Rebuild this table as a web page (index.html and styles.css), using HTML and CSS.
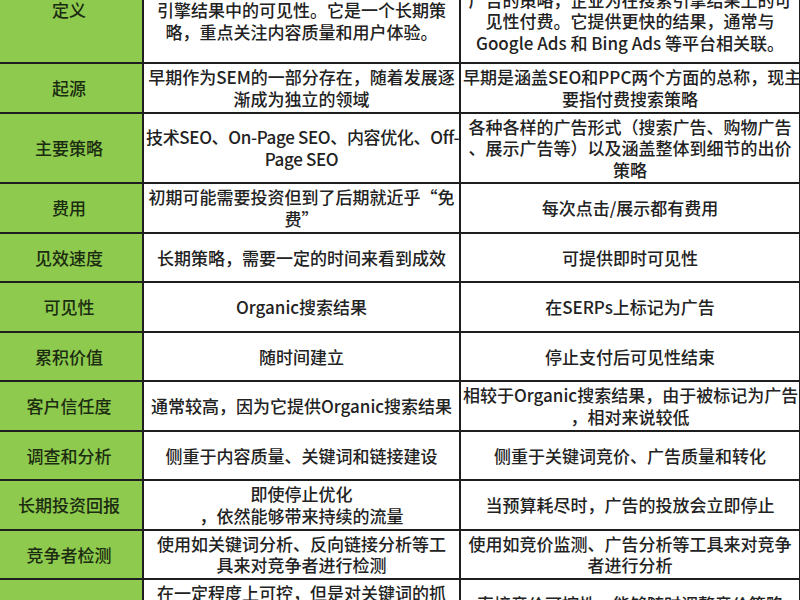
FILE: index.html
```html
<!DOCTYPE html>
<html lang="zh-CN">
<head>
<meta charset="utf-8">
<title>SEO 与 PPC 对比</title>
<link rel="stylesheet" href="styles.css">
</head>
<body>
<table class="sheet">
  <colgroup>
    <col class="c-label">
    <col class="c-seo">
    <col class="c-ppc">
  </colgroup>
  <tbody>
    <tr class="row-first">
      <td class="label">定义</td>
      <td>SEO是一种通过优化网站来提高其在搜索<br>引擎结果中的可见性。它是一个长期策<br>略，重点关注内容质量和用户体验。</td>
      <td>PPC是一种在线广告模式，也是一种搜索<br>广告的策略，企业为在搜索引擎结果上的可<br>见性付费。它提供更快的结果，通常与<br>Google Ads 和 Bing Ads 等平台相关联。</td>
    </tr>
    <tr>
      <td class="label">起源</td>
      <td>早期作为SEM的一部分存在，随着发展逐<br>渐成为独立的领域</td>
      <td>早期是涵盖SEO和PPC两个方面的总称，现主<br>要指付费搜索策略</td>
    </tr>
    <tr>
      <td class="label">主要策略</td>
      <td class="tight">技术SEO、On-Page SEO、内容优化、Off-<br>Page SEO</td>
      <td>各种各样的广告形式（搜索广告、购物广告<br>、展示广告等）以及涵盖整体到细节的出价<br>策略</td>
    </tr>
    <tr>
      <td class="label">费用</td>
      <td>初期可能需要投资但到了后期就近乎“免<br>费”</td>
      <td>每次点击/展示都有费用</td>
    </tr>
    <tr>
      <td class="label">见效速度</td>
      <td>长期策略，需要一定的时间来看到成效</td>
      <td>可提供即时可见性</td>
    </tr>
    <tr>
      <td class="label">可见性</td>
      <td>Organic搜索结果</td>
      <td>在SERPs上标记为广告</td>
    </tr>
    <tr>
      <td class="label">累积价值</td>
      <td>随时间建立</td>
      <td>停止支付后可见性结束</td>
    </tr>
    <tr>
      <td class="label">客户信任度</td>
      <td>通常较高，因为它提供Organic搜索结果</td>
      <td>相较于Organic搜索结果，由于被标记为广告<br>，相对来说较低</td>
    </tr>
    <tr>
      <td class="label">调查和分析</td>
      <td>侧重于内容质量、关键词和链接建设</td>
      <td>侧重于关键词竞价、广告质量和转化</td>
    </tr>
    <tr>
      <td class="label">长期投资回报</td>
      <td>即使停止优化<br>，依然能够带来持续的流量</td>
      <td>当预算耗尽时，广告的投放会立即停止</td>
    </tr>
    <tr>
      <td class="label">竞争者检测</td>
      <td>使用如关键词分析、反向链接分析等工<br>具来对竞争者进行检测</td>
      <td>使用如竞价监测、广告分析等工具来对竞争<br>者进行分析</td>
    </tr>
    <tr>
      <td class="label">控制程度</td>
      <td>在一定程度上可控，但是对关键词的抓<br>取排名等则无法完全掌控<br>，需要长期积累</td>
      <td>直接竞价可控性，能够随时调整竞价策略<br>和投放预算</td>
    </tr>
  </tbody>
</table>
</body>
</html>
```

FILE: styles.css
```css
html, body {
  margin: 0;
  padding: 0;
  overflow: hidden;
  background: #ffffff;
}

body {
  font-family: "Noto Sans CJK SC", "Noto Sans", sans-serif;
  font-size: 17px;
  font-weight: 500;
  color: #222222;
}

.sheet {
  border-collapse: collapse;
  table-layout: fixed;
  width: 805px;
  margin: -44px 0 0 -6px;
}

.c-label { width: 148px; }
.c-seo { width: 317px; }
.c-ppc { width: 340px; }

.sheet tr {
  height: 49.5px;
}

.sheet tr.row-first {
  height: 106px;
}

.sheet td {
  border: 2px solid #1e1e1e;
  padding: 2px 2px;
  line-height: 21.5px;
  text-align: center;
  vertical-align: middle;
  white-space: nowrap;
  overflow: hidden;
}

.sheet td.tight {
  letter-spacing: -0.35px;
}

.sheet td.label {
  background: #8dca4e;
  color: #1c2c10;
}
```
